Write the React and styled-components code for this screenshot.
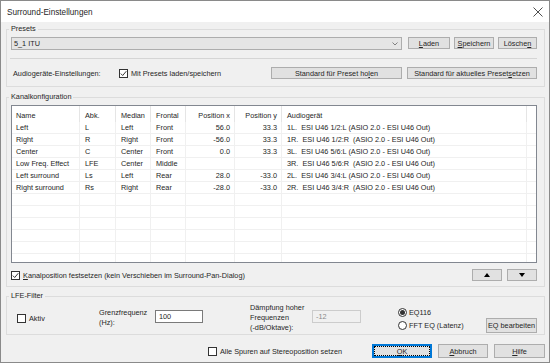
import styled, { createGlobalStyle } from "styled-components";

const GlobalStyle = createGlobalStyle`
  html, body {
    margin: 0;
    padding: 0;
    background: #fff;
  }
  body {
    font-family: "Liberation Sans", Arial, sans-serif;
    font-size: 7.3px;
    color: #262626;
  }
  * {
    box-sizing: border-box;
  }
`;

const rows = [
  ["Left", "L", "Left", "Front", "56.0", "33.3", "1L.  ESI U46 1/2:L (ASIO 2.0 - ESI U46 Out)"],
  ["Right", "R", "Right", "Front", "-56.0", "33.3", "1R.  ESI U46 1/2:R  (ASIO 2.0 - ESI U46 Out)"],
  ["Center", "C", "Center", "Front", "0.0", "33.3", "3L.  ESI U46 5/6:L (ASIO 2.0 - ESI U46 Out)"],
  ["Low Freq. Effect", "LFE", "Center", "Middle", "", "", "3R.  ESI U46 5/6:R  (ASIO 2.0 - ESI U46 Out)"],
  ["Left surround", "Ls", "Left", "Rear", "28.0", "-33.0", "2L.  ESI U46 3/4:L (ASIO 2.0 - ESI U46 Out)"],
  ["Right surround", "Rs", "Right", "Rear", "-28.0", "-33.0", "2R.  ESI U46 3/4:R  (ASIO 2.0 - ESI U46 Out)"],
];

const headers = ["Name", "Abk.", "Median", "Frontal", "Position x", "Position y", "Audiogerät", ""];
const rightCols = [4, 5];

const Check = ({ checked }) => (
  <Box>
    {checked && (
      <svg width="7" height="7" viewBox="0 0 7 7">
        <path d="M0.8 3.6 L2.7 5.5 L6.3 1.2" stroke="#222" strokeWidth="0.9" fill="none" />
      </svg>
    )}
  </Box>
);

const App = () => {
  const emptyRows = Array.from({ length: 7 });
  return (
    <>
      <GlobalStyle />
      <Window>
        <TitleBar>
          <span>Surround-Einstellungen</span>
          <svg width="10" height="10" viewBox="0 0 10 10">
            <path d="M0.5 0.5 L9.5 9.5 M9.5 0.5 L0.5 9.5" stroke="#222" strokeWidth="0.8" />
          </svg>
        </TitleBar>
        <Body>
          <GroupBox $pb={7}>
            <Legend>Presets</Legend>
            <PresetsRow>
              <Combo>
                <span>5_1 ITU</span>
                <svg width="6" height="4" viewBox="0 0 6 4">
                  <path d="M0.5 0.5 L3 3 L5.5 0.5" stroke="#666" strokeWidth="0.8" fill="none" />
                </svg>
              </Combo>
              <Button $w={42} $ml={6}><U>L</U>aden</Button>
              <Button $w={40} $ml={4}><U>S</U>peichern</Button>
              <Button $w={39} $ml={4}>Lösche<U>n</U></Button>
            </PresetsRow>
            <Separator />
            <AudioRow>
              <AudioLabel>Audiogeräte-Einstellungen:</AudioLabel>
              <CheckLabel>
                <Check checked />
                Mit Presets laden/speichern
              </CheckLabel>
              <Button $w={131} $ml="auto">Standard für Preset ho<U>l</U>en</Button>
              <Button $w={130} $ml={5}>Standard für aktuelles Preset <U>s</U>etzen</Button>
            </AudioRow>
          </GroupBox>

          <GroupBox $mt={10} $pb={5}>
            <Legend>Kanalkonfiguration</Legend>
            <Table>
              <HeaderRow>
                {headers.map((h, i) => (
                  <HeadCell key={i} $right={rightCols.includes(i)} $first={i === 0}>
                    {h}
                  </HeadCell>
                ))}
              </HeaderRow>
              {rows.map((r, ri) => (
                <Row key={ri}>
                  {[...r, ""].map((c, i) => (
                    <Cell key={i} $right={rightCols.includes(i)} $first={i === 0}>
                      {c}
                    </Cell>
                  ))}
                </Row>
              ))}
              {emptyRows.map((_, ri) => (
                <Row key={"e" + ri}>
                  {headers.map((_, i) => (
                    <Cell key={i} />
                  ))}
                </Row>
              ))}
            </Table>
            <KanalFooter>
              <CheckLabel>
                <Check checked />
                <span><U>K</U>analposition festsetzen (kein Verschieben im Surround-Pan-Dialog)</span>
              </CheckLabel>
              <Button $w={30} $h={12} $ml="auto">
                <svg width="6" height="4" viewBox="0 0 6 4">
                  <path d="M0 4 L3 0 L6 4 Z" fill="#000" />
                </svg>
              </Button>
              <Button $w={30} $h={12} $ml={5}>
                <svg width="6" height="4" viewBox="0 0 6 4">
                  <path d="M0 0 L6 0 L3 4 Z" fill="#000" />
                </svg>
              </Button>
            </KanalFooter>
          </GroupBox>

          <GroupBox $mt={9} $pb={1}>
            <Legend>LFE-Filter</Legend>
            <LfeRow>
              <AktivCell>
                <CheckLabel>
                  <Check />
                  Aktiv
                </CheckLabel>
              </AktivCell>
              <FieldLabel $w={56}>Grenzfrequenz<br />(Hz):</FieldLabel>
              <TextInput $w={48}>100</TextInput>
              <FieldLabel $w={62} $ml={47}>Dämpfung hoher<br />Frequenzen<br />(-dB/Oktave):</FieldLabel>
              <TextInput $w={49} $disabled>-12</TextInput>
              <RadioGroup>
                <RadioLabel>
                  <Radio $checked />
                  EQ116
                </RadioLabel>
                <RadioLabel>
                  <Radio />
                  FFT EQ (Latenz)
                </RadioLabel>
              </RadioGroup>
              <Button $w={51} $h={15} $ml="auto" $self="flex-end">EQ bearbeiten</Button>
            </LfeRow>
          </GroupBox>

          <BottomRow>
            <CheckLabel $ml={202}>
              <Check />
              Alle Spuren auf Stereoposition setzen
            </CheckLabel>
            <Button $w={60} $h={14} $ml="auto" $default><U>O</U>K</Button>
            <Button $w={50} $h={14} $ml={6}><U>A</U>bbruch</Button>
            <Button $w={51} $h={14} $ml={6}><U>H</U>ilfe</Button>
          </BottomRow>
        </Body>
      </Window>
    </>
  );
};

export default App;

const Window = styled.div`
  width: 550px;
  height: 363px;
  border: 1px solid #8a8a8a;
  display: flex;
  flex-direction: column;
  background: #f0f0f0;
  overflow: hidden;
`;

const TitleBar = styled.div`
  height: 21px;
  flex: none;
  background: #fff;
  display: flex;
  align-items: center;
  justify-content: space-between;
  padding: 1px 6px 0 6px;
  font-size: 8.2px;
`;

const Body = styled.div`
  flex: 1;
  display: flex;
  flex-direction: column;
  padding: 7px 4px 0 5px;
`;

const GroupBox = styled.div`
  border: 1px solid #dcdcdc;
  padding: 0 7px ${(p) => p.$pb || 0}px 4px;
  margin-top: ${(p) => p.$mt || 0}px;
`;

const Legend = styled.div`
  width: max-content;
  height: 10px;
  line-height: 10px;
  margin: -6px 0 0 -2px;
  padding: 0 2px;
  background: #f0f0f0;
`;

const U = styled.span`
  text-decoration: underline;
`;

const PresetsRow = styled.div`
  display: flex;
  height: 13px;
  margin-top: 3px;
`;

const Combo = styled.div`
  flex: 1;
  border: 1px solid #adadad;
  background: #e5e5e5;
  display: flex;
  align-items: center;
  justify-content: space-between;
  padding: 0 3px 0 2px;
`;

const Button = styled.div`
  width: ${(p) => p.$w}px;
  height: ${(p) => p.$h || 12}px;
  margin-left: ${(p) => (p.$ml === "auto" ? "auto" : `${p.$ml || 0}px`)};
  align-self: ${(p) => p.$self || "auto"};
  flex: none;
  display: flex;
  align-items: center;
  justify-content: center;
  background: #e1e1e1;
  border: 1px solid ${(p) => (p.$default ? "#0078d7" : "#adadad")};
  box-shadow: ${(p) => (p.$default ? "inset 0 0 0 1px #0078d7" : "none")};
  outline: ${(p) => (p.$default ? "1px dotted #000" : "none")};
  outline-offset: -3px;
  white-space: nowrap;
`;

const Separator = styled.div`
  height: 1px;
  background: #d5d5d5;
  margin: 8px 0 0 -1px;
`;

const AudioRow = styled.div`
  display: flex;
  align-items: center;
  height: 12px;
  margin-top: 8px;
`;

const AudioLabel = styled.div`
  width: 108px;
  padding-left: 2px;
`;

const CheckLabel = styled.div`
  display: flex;
  align-items: center;
  gap: 3px;
  white-space: nowrap;
  margin-left: ${(p) => p.$ml || 0}px;
`;

const Box = styled.span`
  width: 9px;
  height: 9px;
  flex: none;
  border: 1px solid #333;
  background: #fff;
  display: inline-flex;
  align-items: center;
  justify-content: center;
`;

const Table = styled.div`
  margin-top: 3px;
  height: 158px;
  border: 1px solid #828790;
  background: #fff;
  overflow: hidden;
`;

const gridCols = "68px 36px 35px 35px 49px 47px 245px 1fr";

const HeaderRow = styled.div`
  display: grid;
  grid-template-columns: ${gridCols};
  height: 16px;
`;

const HeadCell = styled.div`
  display: flex;
  align-items: center;
  justify-content: ${(p) => (p.$right ? "flex-end" : "flex-start")};
  padding: 2px 4px 0 ${(p) => (p.$first ? 4 : 5)}px;
  border-right: 1px solid #e5e5e5;
  white-space: nowrap;
`;

const Row = styled.div`
  display: grid;
  grid-template-columns: ${gridCols};
  height: 12px;
  border-bottom: 1px solid #f0f0f0;
`;

const Cell = styled.div`
  display: flex;
  align-items: center;
  justify-content: ${(p) => (p.$right ? "flex-end" : "flex-start")};
  padding: 0 4px 0 ${(p) => (p.$first ? 4 : 5)}px;
  border-right: 1px solid #f0f0f0;
  white-space: pre;
  overflow: hidden;
`;

const KanalFooter = styled.div`
  display: flex;
  align-items: center;
  height: 12px;
  margin-top: 6px;
`;

const LfeRow = styled.div`
  display: flex;
  align-items: center;
  height: 31px;
  margin-top: 1px;
`;

const AktivCell = styled.div`
  width: 88px;
  padding: 2px 0 0 6px;
`;

const FieldLabel = styled.div`
  width: ${(p) => p.$w}px;
  margin-left: ${(p) => p.$ml || 0}px;
  line-height: 10px;
`;

const TextInput = styled.div`
  width: ${(p) => p.$w}px;
  height: 13px;
  margin-top: -2px;
  border: 1px solid ${(p) => (p.$disabled ? "#cccccc" : "#7a7a7a")};
  background: ${(p) => (p.$disabled ? "#f0f0f0" : "#fff")};
  color: ${(p) => (p.$disabled ? "#8a8a8a" : "#262626")};
  display: flex;
  align-items: center;
  padding-left: 3px;
`;

const RadioGroup = styled.div`
  display: flex;
  flex-direction: column;
  gap: 3px;
  margin-left: 37px;
  padding-top: 2px;
`;

const RadioLabel = styled.div`
  display: flex;
  align-items: center;
  gap: 2px;
  height: 10px;
`;

const Radio = styled.span`
  width: 9px;
  height: 9px;
  flex: none;
  border-radius: 50%;
  border: 1px solid #333;
  background: #fff;
  display: inline-flex;
  align-items: center;
  justify-content: center;
  &::after {
    content: "";
    width: 5px;
    height: 5px;
    border-radius: 50%;
    background: ${(p) => (p.$checked ? "#333" : "transparent")};
  }
`;

const BottomRow = styled.div`
  display: flex;
  align-items: center;
  height: 14px;
  margin-top: 9px;
`;
